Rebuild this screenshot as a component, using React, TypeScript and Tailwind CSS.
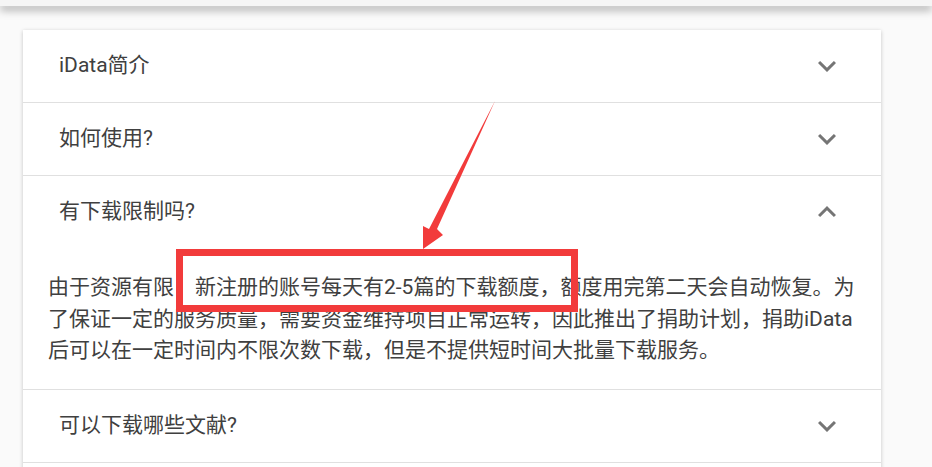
import React from 'react'

type Panel = {
  title: string
  open?: boolean
}

const panels: Panel[] = [
  { title: 'iData简介' },
  { title: '如何使用?' },
  { title: '有下载限制吗?', open: true },
  { title: '可以下载哪些文献?' },
]

const Chevron: React.FC<{ up?: boolean }> = ({ up }) => (
  <svg width="36" height="36" viewBox="0 0 24 24" fill="#757575">
    {up ? (
      <path d="M12 8l-6 6 1.41 1.41L12 10.83l4.59 4.58L18 14z" />
    ) : (
      <path d="M16.59 8.59L12 13.17 7.41 8.59 6 10l6 6 6-6z" />
    )}
  </svg>
)

export default function App() {
  return (
    <div
      className="relative w-[932px] h-[467px] overflow-hidden bg-[#fafafa] text-[#404040]"
      style={{ fontFamily: 'Roboto, "Noto Sans CJK SC", sans-serif' }}
    >
      <div className="h-[6px] bg-[#f5f5f5] shadow-[0_4px_8px_rgba(0,0,0,0.35)]" />

      <div className="pl-[23px] pt-[24px]">
        <div className="w-[858px] bg-white shadow-[0_1px_4px_rgba(0,0,0,0.22)]">
          {panels.map((p, i) => (
            <div key={p.title} className={i > 0 ? 'border-t border-[#e0e0e0]' : ''}>
              <div className="flex h-[72px] items-center justify-between pl-[36px] pr-[36px]">
                <span className="text-[21px]">{p.title}</span>
                <Chevron up={p.open} />
              </div>
              {p.open && (
                <div className="pl-[25px] pr-[12px] pt-[24px] pb-[22px] text-[21px] leading-[1.5] whitespace-nowrap">
                  由于资源有限，新注册的账号每天有2-5篇的下载额度，额度用完第二天会自动恢复。为
                  <br />
                  了保证一定的服务质量，需要资金维持项目正常运转，因此推出了捐助计划，捐助iData
                  <br />
                  后可以在一定时间内不限次数下载，但是不提供短时间大批量下载服务。
                </div>
              )}
            </div>
          ))}
          {/* next panel, below the fold */}
          <div className="h-[72px] border-t border-[#e0e0e0]" />
        </div>
      </div>

      {/* annotation: red box + arrow */}
      <div className="absolute left-[176px] top-[249px] w-[402px] h-[63px] border-[7px] border-[#f23b3b]" />
      <svg className="absolute inset-0 pointer-events-none" width="932" height="467">
        <polygon points="495,101 437,229 443,235 423,249 423,226 429,229" fill="#f23b3b" />
      </svg>
    </div>
  )
}
